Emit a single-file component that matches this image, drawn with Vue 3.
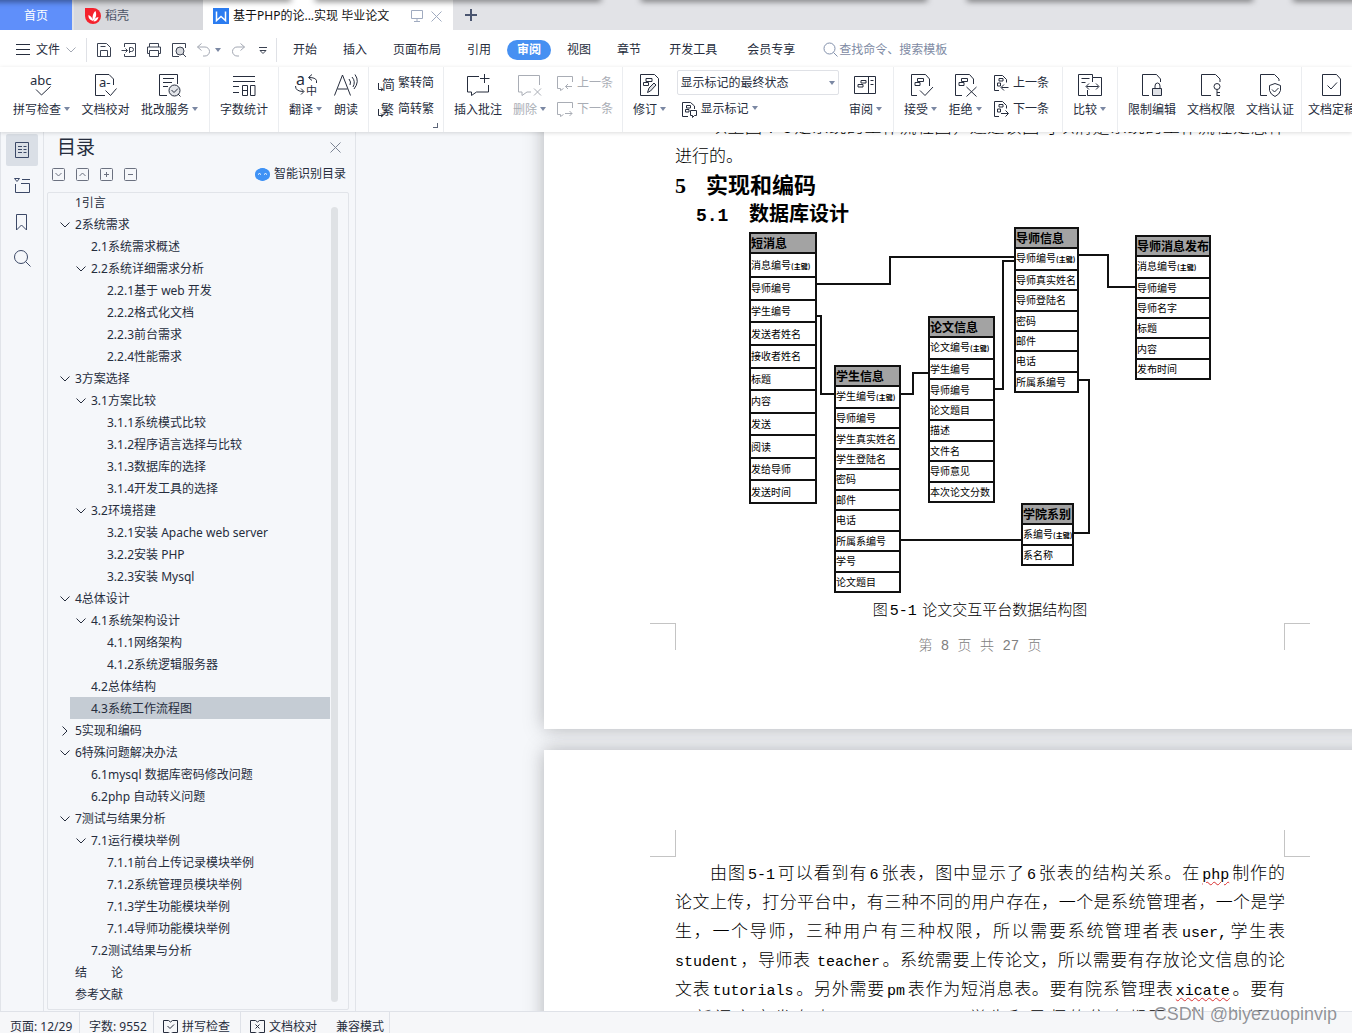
<script setup>
import { h } from 'vue'

const icons = {
  save: '<path d="M1.5 1.5h9l4 4v9h-13zM4.5 14V8.500h7V14M4.500 4.500h5"/>',
  pdf: '<path d="M3.500 5V1.500h11v13h-11V12M.5 8.500h6M4.500 6.500l2 2-2 2M8.500 11V5.500h2a2 2 0 0 1 0 4h-2"/>',
  print: '<path d="M3.500 5V1.500h9V5M3 11.500H1.500v-6.500h13v6.500H13M3.500 8.500h9v6h-9z"/>',
  preview: '<path d="M14.500 6V1.500h-13v13H8"/><circle cx="9" cy="9" r="4" fill="#d7d9dd"/><path d="M12 12l3 3"/>',
  undo: '<path d="M5.500 1.500l-4 3.500 4 3.500M1.500 5h7.500a4 4 0 0 1 0 9H7"/>',
  redo: '<path d="M10.500 1.500l4 3.500-4 3.500M14.500 5H7a4 4 0 0 0 0 9h2"/>',
  spell: '<text x="0" y="12" font-size="13">abc</text><path d="M6 16.500l5.500 5.500 9-8.500"/>',
  proof: '<path d="M12 22.500H2.500v-21h13.500l4.500 4.500v6"/><text x="6" y="14" font-size="13">a-</text><path d="M12.500 17.500l5 5 6-7"/>',
  correct: '<path d="M10 22.500H2.500v-21h18V11M6 5.500h11M6 9.500h9M6 13.500h5"/><circle cx="17.500" cy="17.500" r="5.500" fill="#e3e5e9"/><path d="M14.500 17l2.500 2.500 4-4M21 21l2.500 2.500"/>',
  count: '<path d="M1 3.500h22M1 8.500h22M1 13.500h6M1 19.500h6M10.500 12.500h5v10h-5zM10.500 17.500h5M18.500 12.500h4.500v10h-4.500z"/>',
  translate: '<text x="2" y="12" font-size="16">a</text><text x="12" y="22" font-size="11">中</text><path d="M22.500 10V7.500q-1-3-7.500-3M18 1.500l-3.500 3 3.500 3M1.500 13q0 5.500 8 5.500M7 15.500l3 3-3 3"/>',
  read: '<path d="M0.500 22.500L8.500 2l8 20.500M3.500 16h10M15 6q2.500 3 1 6M18 4q4 4.500 1 10M21 1.500q5 7-1 14.500"/>',
  toSimple: '<text x="4" y="14" font-size="13">简</text><path d="M.5 8v6.500H5M3 12.500l2 2-2 1.500"/>',
  toTrad: '<text x="3" y="13" font-size="13">繁</text><path d="M.5 8v6.500H5M3 12.500l2 2-2 1.500"/>',
  comment: '<path d="M13 3.500H1.500v15.500h4v3.500l5-3.500H22.500V12M18.500 1v9M14 5.500h9.500"/>',
  delComment: '<path d="M14 19h-4l-5 3.500V19H1.500V2.500h21V12M17 15.500l7 7M24 15.500l-7 7"/>',
  prevComment: '<path d="M6.500 13.500l-3 2v-2h-3v-12h15V7M15 11.500H8.500M11 9l-2.500 2.500L11 14"/>',
  nextComment: '<path d="M6.500 13.500l-3 2v-2h-3v-12h15V7M8 12.500h7M12.500 10l2.500 2.500-2.500 2.500"/>',
  revise: '<path d="M2.500 1.500h14l4 4v17h-18zM8 5.500h6v3H8zM5.500 9.500h5v3h-5z"/><path d="M9.500 19.500l1.500-4.500 5-5 2 2-5.500 6z" fill="#dfe1e6"/>',
  showMark: '<path d="M7 15.500H1.500v-14h8l4 3.500v3M5.500 4.500h4v2.500h-4zM4.500 8.500h3.500v2.500H4.500zM9.500 9.500h6v5h-2l-2 2v-2h-2z"/>',
  pane: '<path d="M1.500 3.500h21v17h-21zM15.500 3.500v17M8 7.500h5v2.500H8zM5 11.500h5v2.500H5zM17.500 7.500h3M17.500 11.500h3"/>',
  accept: '<path d="M8 22.500H2.500v-21h14l4 4.500v7M8.500 5.500h6v3h-6zM6 9.500h5v3H6zM11 17.500l5 5 8-8.500"/>',
  reject: '<path d="M9 22.500H2.500v-21h14l4 4.500v5M8.500 5.500h6v3h-6zM6 9.500h5v3H6zM13.500 14l10 9.500M23.500 14l-10 9.500"/>',
  prevMark: '<path d="M6 15.500H1.500v-15h8l4 4v3M6 3.500h4v2.500H6zM4.500 8h3v3h-3zM15.500 12.500H8.500M11 9.500l-3 3 3 3"/>',
  nextMark: '<path d="M6 15.500H1.500v-15h8l4 4v3M6 3.500h4v2.500H6zM4.500 8h3v3h-3zM8 12.500h7M12.500 9.500l3 3-3 3"/>',
  compare: '<path d="M8 22.500H.5v-21h14v3M3.500 5.500h8M3.500 9.500h4M14.500 9V4.500h9v18h-14V17M8.500 13.500h12M11 10.500l-3 3 3 3M18 10.500l3 3-3 3"/>',
  lock: '<path d="M9 22.500H2.500v-21h14l4 4.500v3M15 16v-3q0-3 2.500-3t2.500 3v3"/><path d="M12.500 15.500h9v7h-9z" fill="#dfe1e6"/>',
  key: '<path d="M12 22.500H2.500v-21h14l4.500 4.500v3"/><circle cx="18" cy="13.500" r="3"/><path d="M18 16.500v6.500M18 19.500h3M18 22.500h3"/>',
  shield: '<path d="M9 22.500H2.500v-21h14l4.500 4.500v2M17 10.500l5.500 2v5q-1 4-5.500 6-4.500-2-5.500-6v-5zM14 16.500l2.500 2.500 4-4"/>',
  final: '<path d="M2.500 1.500h14l4 4.500v16.500h-18zM7.500 12.500l3.500 3.500 6-6.500"/>',
  screen: '<path d="M.5 1.500h11v8H.5zM6 9.500v3M3 12.500h6"/>',
  close: '<path d="M1.500 1.500l10 10M11.500 1.500l-10 10"/>',
  chevron: '<path d="M.5 2.500l4.500 4.500 4.500-4.500"/>',
  menu: '<path d="M0 1.500h14M0 6.500h14M0 11.500h14"/>',
  more: '<path d="M0 1.500h8M1 4.500l3 3 3-3z"/>',
  search: '<circle cx="6.500" cy="6.500" r="5.500"/><path d="M10.500 10.500l4 4"/>',
  toc: '<path d="M1.500.5h13v15h-13zM4 4.500h4M4 7.500h4M4 10.500h4M9.500 4.500h3M9.500 7.500h3M9.500 10.500h3"/>',
  chapter: '<path d="M1.500 6v8.500h14v-9H7M.5.5h5L3 3.500zM8 1.500h8"/>',
  bookmark: '<path d="M2.500.5h10v15.500l-5-5-5 5z"/>',
  find: '<circle cx="7" cy="7" r="6.500"/><path d="M11.500 11.500l5 5"/>',
  boxDown: '<rect x=".5" y=".5" width="12" height="12" rx="1"/><path d="M3.500 5l3 3 3-3"/>',
  boxUp: '<rect x=".5" y=".5" width="12" height="12" rx="1"/><path d="M3.500 8l3-3 3 3"/>',
  boxPlus: '<rect x=".5" y=".5" width="12" height="12" rx="1"/><path d="M4 6.500h5M6.500 4v5"/>',
  boxMinus: '<rect x=".5" y=".5" width="12" height="12" rx="1"/><path d="M4 6.500h5"/>',
  bookCheck: '<path d="M.5 1.500h5l2 1.500 2-1.500h5v12h-5l-2 1.500-2-1.500h-5zM4.500 7l2.500 2.500 4-4"/>',
  bookX: '<path d="M.5 1.500h5l2 1.500 2-1.500h5v12h-5l-2 1.500-2-1.500h-5zM5.500 5.500l4 4M9.500 5.500l-4 4"/>',
}

function Icon({ n, w = 16, hh }) {
  const height = hh || w
  return h('svg', {
    width: w, height, viewBox: `0 0 ${w} ${height}`, fill: 'none',
    stroke: 'currentColor', class: 'icon', 'aria-hidden': 'true', innerHTML: icons[n],
  })
}
Icon.props = ['n', 'w', 'hh']

const menus = [
  { t: '开始' }, { t: '插入' }, { t: '页面布局' }, { t: '引用' }, { t: '审阅', on: true },
  { t: '视图' }, { t: '章节' }, { t: '开发工具', wide: true }, { t: '会员专享', wide: true },
]

const toc = [
  [1, '1引言'], [1, '2系统需求', 'open'], [2, '2.1系统需求概述'], [2, '2.2系统详细需求分析', 'open'],
  [3, '2.2.1基于 web 开发'], [3, '2.2.2格式化文档'], [3, '2.2.3前台需求'], [3, '2.2.4性能需求'],
  [1, '3方案选择', 'open'], [2, '3.1方案比较', 'open'], [3, '3.1.1系统模式比较'], [3, '3.1.2程序语言选择与比较'],
  [3, '3.1.3数据库的选择'], [3, '3.1.4开发工具的选择'], [2, '3.2环境搭建', 'open'],
  [3, '3.2.1安装 Apache web server'], [3, '3.2.2安装 PHP'], [3, '3.2.3安装 Mysql'],
  [1, '4总体设计', 'open'], [2, '4.1系统架构设计', 'open'], [3, '4.1.1网络架构'], [3, '4.1.2系统逻辑服务器'],
  [2, '4.2总体结构'], [2, '4.3系统工作流程图', 'current'], [1, '5实现和编码', 'shut'],
  [1, '6特殊问题解决办法', 'open'], [2, '6.1mysql 数据库密码修改问题'], [2, '6.2php 自动转义问题'],
  [1, '7测试与结果分析', 'open'], [2, '7.1运行模块举例', 'open'], [3, '7.1.1前台上传记录模块举例'],
  [3, '7.1.2系统管理员模块举例'], [3, '7.1.3学生功能模块举例'], [3, '7.1.4导师功能模块举例'],
  [2, '7.2测试结果与分析'], [1, '结　　论'], [1, '参考文献'],
].map(([level, text, state]) => ({ level, text, state }))

const entities = [
  { name: '短消息', x: 74, y: 4, w: 68, h: 272, rows: ['消息编号*', '导师编号', '学生编号', '发送者姓名', '接收者姓名', '标题', '内容', '发送', '阅读', '发给导师', '发送时间'] },
  { name: '学生信息', x: 159, y: 137, w: 67, h: 228, rows: ['学生编号*', '导师编号', '学生真实姓名', '学生登陆名', '密码', '邮件', '电话', '所属系编号', '学号', '论文题目'] },
  { name: '论文信息', x: 253, y: 88, w: 67, h: 187, rows: ['论文编号*', '学生编号', '导师编号', '论文题目', '描述', '文件名', '导师意见', '本次论文分数'] },
  { name: '导师信息', x: 339, y: -1, w: 65, h: 166, rows: ['导师编号*', '导师真实姓名', '导师登陆名', '密码', '邮件', '电话', '所属系编号'] },
  { name: '导师消息发布', x: 460, y: 7, w: 76, h: 145, rows: ['消息编号*', '导师编号', '导师名字', '标题', '内容', '发布时间'] },
  { name: '学院系别', x: 346, y: 275, w: 53, h: 63, rows: ['系编号*', '系名称'] },
]
</script>

<template>
  <div class="app">
    <div class="shade" aria-hidden="true"><i></i><i></i><i></i><i></i><i></i></div>

    <header class="tabs">
      <button class="tab home">首页</button>
      <button class="tab docer">
        <svg width="16" height="16" viewBox="0 0 16 16"><path d="M0 0h8a8 8 0 1 1-8 8z" fill="#f5222d"/><path d="M8 13C5 12 3 10 3.500 7 6 8 7.500 10 8 13zM8 13C7 9 8 5 10.500 3 12 7 11 10 8 13zM8.500 13.500c1-3 2.500-4 5-4.500-.5 2.500-2 4.500-5 4.500z" fill="#fff"/></svg>
        稻壳
      </button>
      <div class="tab doc">
        <svg width="16" height="16" viewBox="0 0 16 16"><path d="M0 0h16v16H0z" fill="#2b7cf0"/><path d="M3.500 3.500v9l4.500-4 4.500 4v-9" fill="none" stroke="#fff" stroke-width="1.500"/></svg>
        <span class="doc-name">基于PHP的论...实现 毕业论文</span>
        <Icon n="screen" :w="12" :hh="14" />
        <button class="plain" aria-label="关闭"><Icon n="close" :w="13" /></button>
      </div>
      <button class="plain add" aria-label="新建">
        <svg width="12" height="12" viewBox="0 0 12 12"><path d="M6 0v12M0 6h12" stroke="#4a5570" stroke-width="2"/></svg>
      </button>
    </header>

    <nav class="menubar">
      <button class="plain file"><Icon n="menu" :w="14" />文件<Icon class="dim" n="chevron" :w="10" /></button>
      <div class="quick">
        <button class="plain" aria-label="保存"><Icon n="save" /></button>
        <button class="plain" aria-label="输出为PDF"><Icon n="pdf" /></button>
        <button class="plain" aria-label="打印"><Icon n="print" /></button>
        <button class="plain" aria-label="打印预览"><Icon n="preview" /></button>
        <button class="plain dim" aria-label="撤销"><Icon n="undo" /><i class="caret"></i></button>
        <button class="plain dim" aria-label="恢复"><Icon n="redo" /></button>
        <button class="plain more" aria-label="更多"><Icon n="more" :w="8" /></button>
      </div>
      <button v-for="m in menus" :key="m.t" class="plain menu" :class="{ on: m.on, wide: m.wide }">{{ m.t }}</button>
      <label class="find"><Icon n="search" :w="15" /><input type="text" placeholder="查找命令、搜索模板" aria-label="查找命令" /></label>
    </nav>

    <div class="ribbon">
      <div class="group g-check">
        <button class="big"><Icon n="spell" :w="24" /><span>拼写检查<i class="caret"></i></span></button>
        <button class="big"><Icon n="proof" :w="24" /><span>文档校对</span></button>
        <button class="big"><Icon n="correct" :w="24" /><span>批改服务<i class="caret"></i></span></button>
      </div>
      <div class="group g-count"><button class="big"><Icon n="count" :w="24" /><span>字数统计</span></button></div>
      <div class="group g-lang">
        <button class="big"><Icon n="translate" :w="24" /><span>翻译<i class="caret"></i></span></button>
        <button class="big"><Icon n="read" :w="24" /><span>朗读</span></button>
      </div>
      <div class="group g-conv">
        <div class="stack">
          <button class="small"><Icon n="toSimple" :w="16" />繁转简</button>
          <button class="small"><Icon n="toTrad" :w="16" />简转繁</button>
        </div>
        <i class="launcher"></i>
      </div>
      <div class="group g-comment">
        <button class="big"><Icon n="comment" :w="24" /><span>插入批注</span></button>
        <button class="big off"><Icon n="delComment" :w="24" /><span>删除<i class="caret"></i></span></button>
        <div class="stack off">
          <button class="small"><Icon n="prevComment" />上一条</button>
          <button class="small"><Icon n="nextComment" />下一条</button>
        </div>
      </div>
      <div class="group g-revise">
        <button class="big"><Icon n="revise" :w="24" /><span>修订<i class="caret"></i></span></button>
        <div class="stack marks">
          <div class="pick">
            <select aria-label="标记显示方式"><option>显示标记的最终状态</option></select>
            <i class="caret"></i>
          </div>
          <button class="small"><Icon n="showMark" /><span>显示标记<i class="caret"></i></span></button>
        </div>
        <button class="big"><Icon n="pane" :w="24" /><span>审阅<i class="caret"></i></span></button>
      </div>
      <div class="group g-accept">
        <button class="big"><Icon n="accept" :w="24" /><span>接受<i class="caret"></i></span></button>
        <button class="big"><Icon n="reject" :w="24" /><span>拒绝<i class="caret"></i></span></button>
        <div class="stack">
          <button class="small"><Icon n="prevMark" />上一条</button>
          <button class="small"><Icon n="nextMark" />下一条</button>
        </div>
      </div>
      <div class="group g-compare"><button class="big"><Icon n="compare" :w="24" /><span>比较<i class="caret"></i></span></button></div>
      <div class="group g-guard">
        <button class="big"><Icon n="lock" :w="24" /><span>限制编辑</span></button>
        <button class="big"><Icon n="key" :w="24" /><span>文档权限</span></button>
        <button class="big"><Icon n="shield" :w="24" /><span>文档认证</span></button>
      </div>
      <div class="group g-final"><button class="big"><Icon n="final" :w="24" /><span>文档定稿</span></button></div>
    </div>

    <div class="body">
      <aside class="rail">
        <button class="on" aria-label="目录"><Icon n="toc" /></button>
        <button aria-label="章节"><Icon n="chapter" /></button>
        <button aria-label="书签"><Icon n="bookmark" /></button>
        <button aria-label="查找"><Icon n="find" :w="17" /></button>
      </aside>

      <section class="panel">
        <div class="panel-head">
          <h2>目录</h2>
          <button class="plain" aria-label="关闭目录"><Icon n="close" :w="13" /></button>
        </div>
        <div class="panel-tools">
          <button class="plain" aria-label="展开"><Icon n="boxDown" :w="13" /></button>
          <button class="plain" aria-label="收起"><Icon n="boxUp" :w="13" /></button>
          <button class="plain" aria-label="添加"><Icon n="boxPlus" :w="13" /></button>
          <button class="plain" aria-label="减少"><Icon n="boxMinus" :w="13" /></button>
          <button class="plain smart">
            <svg width="15" height="13" viewBox="0 0 15 13"><rect x="0" y="1" width="15" height="11" rx="5" fill="#3f92f5"/><rect x="2" y="0" width="11" height="13" rx="5" fill="#3f92f5"/><path d="M3 6.500q1.500-2 3 0M9 6.500q1.500-2 3 0" stroke="#fff" fill="none"/></svg>
            智能识别目录
          </button>
        </div>
        <div class="toc">
          <ul>
            <li v-for="item in toc" :key="item.text" :class="['l' + item.level, item.state]">
              <span class="arrow"><Icon v-if="item.state === 'open' || item.state === 'shut'" n="chevron" :w="10" /></span>{{ item.text }}
            </li>
          </ul>
          <i class="thumb"></i>
        </div>
      </section>

      <main class="canvas">
        <article class="page first">
          <p class="line indent">以上图<b>4-3</b>是系统的工作流程图，通过该图可以清楚系统的工作流程是怎样</p>
          <p>进行的。</p>
          <h1><span>5</span>实现和编码</h1>
          <h2><span>5.1</span>数据库设计</h2>
          <figure>
            <div class="diagram">
              <table v-for="e in entities" :key="e.name" :style="{ left: e.x + 'px', top: e.y + 'px', width: e.w + 'px', height: e.h + 'px' }">
                <thead><tr><th>{{ e.name }}</th></tr></thead>
                <tbody>
                  <tr v-for="r in e.rows" :key="r"><td>{{ r.replace('*', '') }}<small v-if="r.endsWith('*')">(主键)</small></td></tr>
                </tbody>
              </table>
              <svg class="wires" width="610" height="368" viewBox="-1 0 610 368" fill="none" stroke="#111" stroke-width="2">
                <path d="M141 56h73V29h124M139 88h6v78h14M225 166h12v-21h16M319 161h8V33h11M403 27h29v32h28M403 152h10v153h-15M225 312h121"/>
              </svg>
            </div>
            <figcaption>图<b>5-1</b> 论文交互平台数据结构图</figcaption>
          </figure>
          <footer>
            <i class="corner tr"></i>
            <span>第 8 页 共 27 页</span>
            <i class="corner tl"></i>
          </footer>
        </article>

        <article class="page second">
          <div class="margins"><i class="corner br"></i><i class="corner bl"></i></div>
          <p class="line indent">由图<b>5-1</b>可以看到有<b>6</b>张表，图中显示了<b>6</b>张表的结构关系。在<b class="typo">php</b>制作的</p>
          <p class="line">论文上传，打分平台中，有三种不同的用户存在，一个是系统管理者，一个是学</p>
          <p class="line">生，一个导师，三种用户有三种权限，所以需要系统管理者表<b>user,</b>学生表</p>
          <p class="line"><b class="start">student</b>，导师表 <b>teacher</b>。系统需要上传论文，所以需要有存放论文信息的论</p>
          <p class="line">文表<b>tutorials</b>。另外需要<b>pm</b>表作为短消息表。要有院系管理表<b class="typo">xicate</b>。要有</p>
          <p class="line">一新闻文章发布表<b>announcement</b>，学生和导师的信息都要存放在数据库</p>
        </article>
      </main>
    </div>

    <footer class="status">
      <span class="pages">页面: 12/29</span>
      <span class="words">字数: 9552</span>
      <button class="plain"><Icon n="bookCheck" />拼写检查</button>
      <button class="plain"><Icon n="bookX" />文档校对</button>
      <span class="compat">兼容模式</span>
    </footer>
    <div class="watermark">CSDN @biyezuopinvip</div>
  </div>
</template>

<style>
body { margin: 0; }
</style>

<style scoped>
.app {
  position: relative;
  display: flex;
  flex-direction: column;
  height: 100vh;
  overflow: hidden;
  background: #f5f7fa;
  color: #262d3d;
  font: 12px/16px "Noto Sans", "Noto Sans CJK SC", sans-serif;
}
* { box-sizing: border-box; }
button, input, select { font: inherit; color: inherit; border: 0; padding: 0; background: none; }
p, h1, h2, ul, figure { margin: 0; padding: 0; }
.icon { flex: none; display: block; overflow: visible; }
.icon :deep(text) { stroke: none; fill: currentColor; }
.plain { display: flex; align-items: center; }
.dim { color: #a3a8b3; }
.caret {
  display: inline-block;
  flex: none;
  margin-left: 3px;
  border: 3px solid transparent;
  border-top: 4px solid #7b88a3;
  border-bottom: 0;
  vertical-align: 3px;
}

/* shadow cast by the window that sits above this one */
.shade { position: absolute; z-index: 5; top: -3px; left: -30px; right: -30px; display: flex; gap: 42px; }
.shade i { flex: 0 0 284px; height: 3px; box-shadow: 0 0 6px 1px rgba(0, 0, 0, .6); }
.shade i:first-child { flex-basis: 320px; margin-right: -16px; }

.tabs { flex: none; display: flex; height: 30px; background: #e2e3e7; }
.tab { display: flex; align-items: center; padding-top: 2px; }
.home { width: 72px; justify-content: center; background: #5f8ffa; color: #fff; }
.docer { width: 129px; margin-left: 2px; padding-left: 11px; gap: 4px; background: #d8d9dd; color: #4b5366; }
.doc { width: 250px; padding-left: 10px; background: #fff; color: #111; }
.doc-name { flex: 1; margin-left: 4px; white-space: nowrap; }
.doc .icon { color: #a0abc0; margin-right: 7px; }
.doc .plain .icon { margin-right: 10px; }
.add { margin-left: 12px; }

.menubar { flex: none; display: flex; align-items: center; height: 37px; padding-top: 2px; background: #fff; gap: 6px; }
.file { height: 24px; padding: 0 10px 0 16px; gap: 6px; border-right: 1px solid #dfe1e6; }
.quick { display: flex; align-items: center; width: 184px; height: 24px; padding-left: 3px; gap: 9px; border-right: 1px solid #dfe1e6; color: #3b4252; }
.more { margin-left: 4px; }
.menu { flex: none; height: 20px; padding: 0 10px; border-radius: 10px; }
.menu.wide { padding: 0 12px; }
.menu.on { background: #4690f2; color: #fff; font-weight: 700; }
.find { display: flex; align-items: center; margin-left: 10px; gap: 1px; color: #8290ab; }
.find input { width: 120px; outline: 0; }
.find input::placeholder { color: #7e8aa3; opacity: 1; }

.ribbon { position: relative; z-index: 2; flex: none; display: flex; height: 65px; background: #fff; box-shadow: 0 1px 4px rgba(0, 0, 0, .14); overflow-x: clip; }
.group { position: relative; flex: none; display: flex; justify-content: space-between; padding: 6px 10px 0; border-right: 1px solid #ebedf0; }
.g-check { width: 210px; padding-left: 13px; padding-right: 11px; }
.g-count { width: 69px; }
.g-lang { width: 90px; }
.g-conv { width: 75px; padding-right: 8px; padding-left: 9px; }
.g-comment { width: 179px; padding-right: 9px; }
.g-revise { width: 271px; padding-right: 11px; }
.g-accept { width: 169px; padding-right: 13px; }
.g-compare { width: 55px; }
.g-guard { width: 184px; padding-right: 7px; }
.g-final { width: 70px; padding-left: 6px; border: 0; }
.big { display: flex; flex-direction: column; align-items: center; gap: 5px; white-space: nowrap; }
.stack { display: flex; flex-direction: column; gap: 2px; margin-top: -2px; }
.small { display: flex; align-items: center; height: 24px; gap: 4px; white-space: nowrap; }
.off { color: #a9adb5; }
.launcher { position: absolute; right: 5px; bottom: 4px; width: 5px; height: 5px; border: solid #5c6578; border-width: 0 1px 1px 0; }
.stack.marks { margin-top: -3px; }
.pick { position: relative; }
.pick select { appearance: none; width: 162px; height: 25px; padding: 0 3px; border: 1px solid #dfe1e6; border-radius: 2px; background: #fff; }
.pick .caret { position: absolute; right: 4px; top: 11px; }
.marks .small { margin-left: 4px; }

.body { flex: 1; display: flex; min-height: 0; }
.rail { flex: none; width: 44px; padding: 2px 0 0 5px; border: solid #e1e4e9; border-width: 0 1px; display: flex; flex-direction: column; gap: 4px; color: #3c4967; }
.rail button { display: flex; align-items: center; justify-content: center; width: 32px; height: 32px; border-radius: 2px; }
.rail .on { background: #dadfe6; }

.panel { flex: none; display: flex; flex-direction: column; width: 312px; padding: 0 6px 1px 3px; border-right: 1px solid #e1e4e9; }
.panel-head { display: flex; align-items: center; justify-content: space-between; height: 30px; padding: 0 7px 0 10px; }
.panel-head h2 { font-size: 19px; line-height: 28px; font-weight: 400; }
.panel-head .plain { color: #7c8494; }
.panel-tools { display: flex; align-items: center; height: 24px; padding-left: 5px; margin-bottom: 6px; gap: 11px; color: #6b7180; }
.smart { margin-left: auto; margin-right: 3px; gap: 4px; color: #262d3d; }
.toc { position: relative; flex: 1; min-height: 0; overflow: hidden; border: 1px solid #e1e4e9; border-radius: 2px; padding: 0 18px 0 22px; }
.toc ul { margin-top: -2px; list-style: none; }
.toc li { display: flex; align-items: center; height: 22px; padding-top: 2px; white-space: pre; }
.toc li.l1 { padding-left: 5px; }
.toc li.l2 { padding-left: 21px; }
.toc li.l3 { padding-left: 37px; }
.toc li.current { background: #c5ccd4; }
.arrow { flex: none; width: 16px; margin-left: -16px; padding-left: 1px; }
.shut .arrow .icon { transform: rotate(-90deg); }
.thumb { position: absolute; top: 14px; right: 10px; bottom: 7px; width: 7px; border-radius: 4px; background: #dfe2e5; }

.canvas { flex: 1; min-width: 0; overflow: hidden; padding-left: 188px; color: #000; }
.page { width: 872px; padding: 0 131px; background: #fff; box-shadow: 0 0 18px rgba(60, 62, 66, .36); font-size: 17px; line-height: 29px; font-family: "Noto Sans CJK SC", sans-serif; font-weight: 300; }
.first { margin-top: -21px; }
.second { position: relative; margin-top: 21px; padding-top: 80px; height: 1200px; }
.page p { height: 29px; white-space: nowrap; }
.page p.line { text-align: justify; text-align-last: justify; white-space: normal; }
.page p.indent { padding-left: 35px; }
.page b { font: 15px/20px "Liberation Mono", monospace; padding: 0 2px; }
.page b.start { padding-left: 0; }
.page b.typo { text-decoration: underline wavy #d93030 1px; text-underline-offset: 2px; }
.page h1, .page h2 { display: flex; align-items: baseline; height: 29px; line-height: 29px; font-weight: 700; }
.page h1 { font-size: 22px; }
.page h1 span { width: 31px; font-family: "Liberation Serif", serif; }
.page h2 { padding-left: 21px; font-size: 20px; margin-bottom: 1px; }
.page h2 span { width: 53px; font-size: 18px; font-family: "Liberation Mono", monospace; }
.diagram { position: relative; height: 367px; }
.diagram table { position: absolute; table-layout: fixed; border-collapse: collapse; font-size: 10px; line-height: 12px; white-space: nowrap; background: #fff; font-weight: 400; }
.diagram th { height: 20px; padding: 0; text-align: left; font-size: 12px; background: #a3a3a3; border: 2px solid #111; }
.diagram td { padding: 0; border: 2px solid #111; }
.diagram small { font-size: 7px; font-weight: 700; }
.wires { position: absolute; left: 0; top: 0; }
figcaption { height: 28px; text-align: center; font-size: 15px; line-height: 28px; }
.page footer { display: flex; justify-content: space-between; height: 106px; margin: 0 -25px; color: #808080; font-size: 14px; }
.page footer span { margin-top: 9px; font-family: "Liberation Mono", "Noto Sans CJK SC", monospace; }
.corner { width: 26px; height: 27px; border: 0 solid #c4c4c4; }
.tr { border-width: 1px 1px 0 0; }
.tl { border-width: 1px 0 0 1px; }
.br { border-width: 0 1px 1px 0; }
.bl { border-width: 0 0 1px 1px; }
.margins { display: flex; justify-content: space-between; height: 27px; margin: 0 -25px; }

.status { position: relative; z-index: 1; flex: none; display: flex; height: 22px; padding: 0 10px; border-top: 1px solid #dfe2e8; background: #f6f7f9; white-space: nowrap; }
.status > * { height: 30px; padding-top: 6px; gap: 3px; border-right: 1px solid #dfe2e8; line-height: 18px; }
.pages { width: 70px; }
.words { width: 74px; padding-left: 9px; }
.status .plain { width: 87px; padding: 0 0 0 9px; }
.status .plain:nth-child(4) { border: 0; }
.status .compat { padding: 6px 5px 0 8px; }
.watermark { position: absolute; z-index: 3; right: 15px; bottom: 8px; font: 18px/21px "Liberation Sans", sans-serif; color: rgba(125, 128, 134, .85); text-shadow: 0 0 1px #fff; }
</style>
